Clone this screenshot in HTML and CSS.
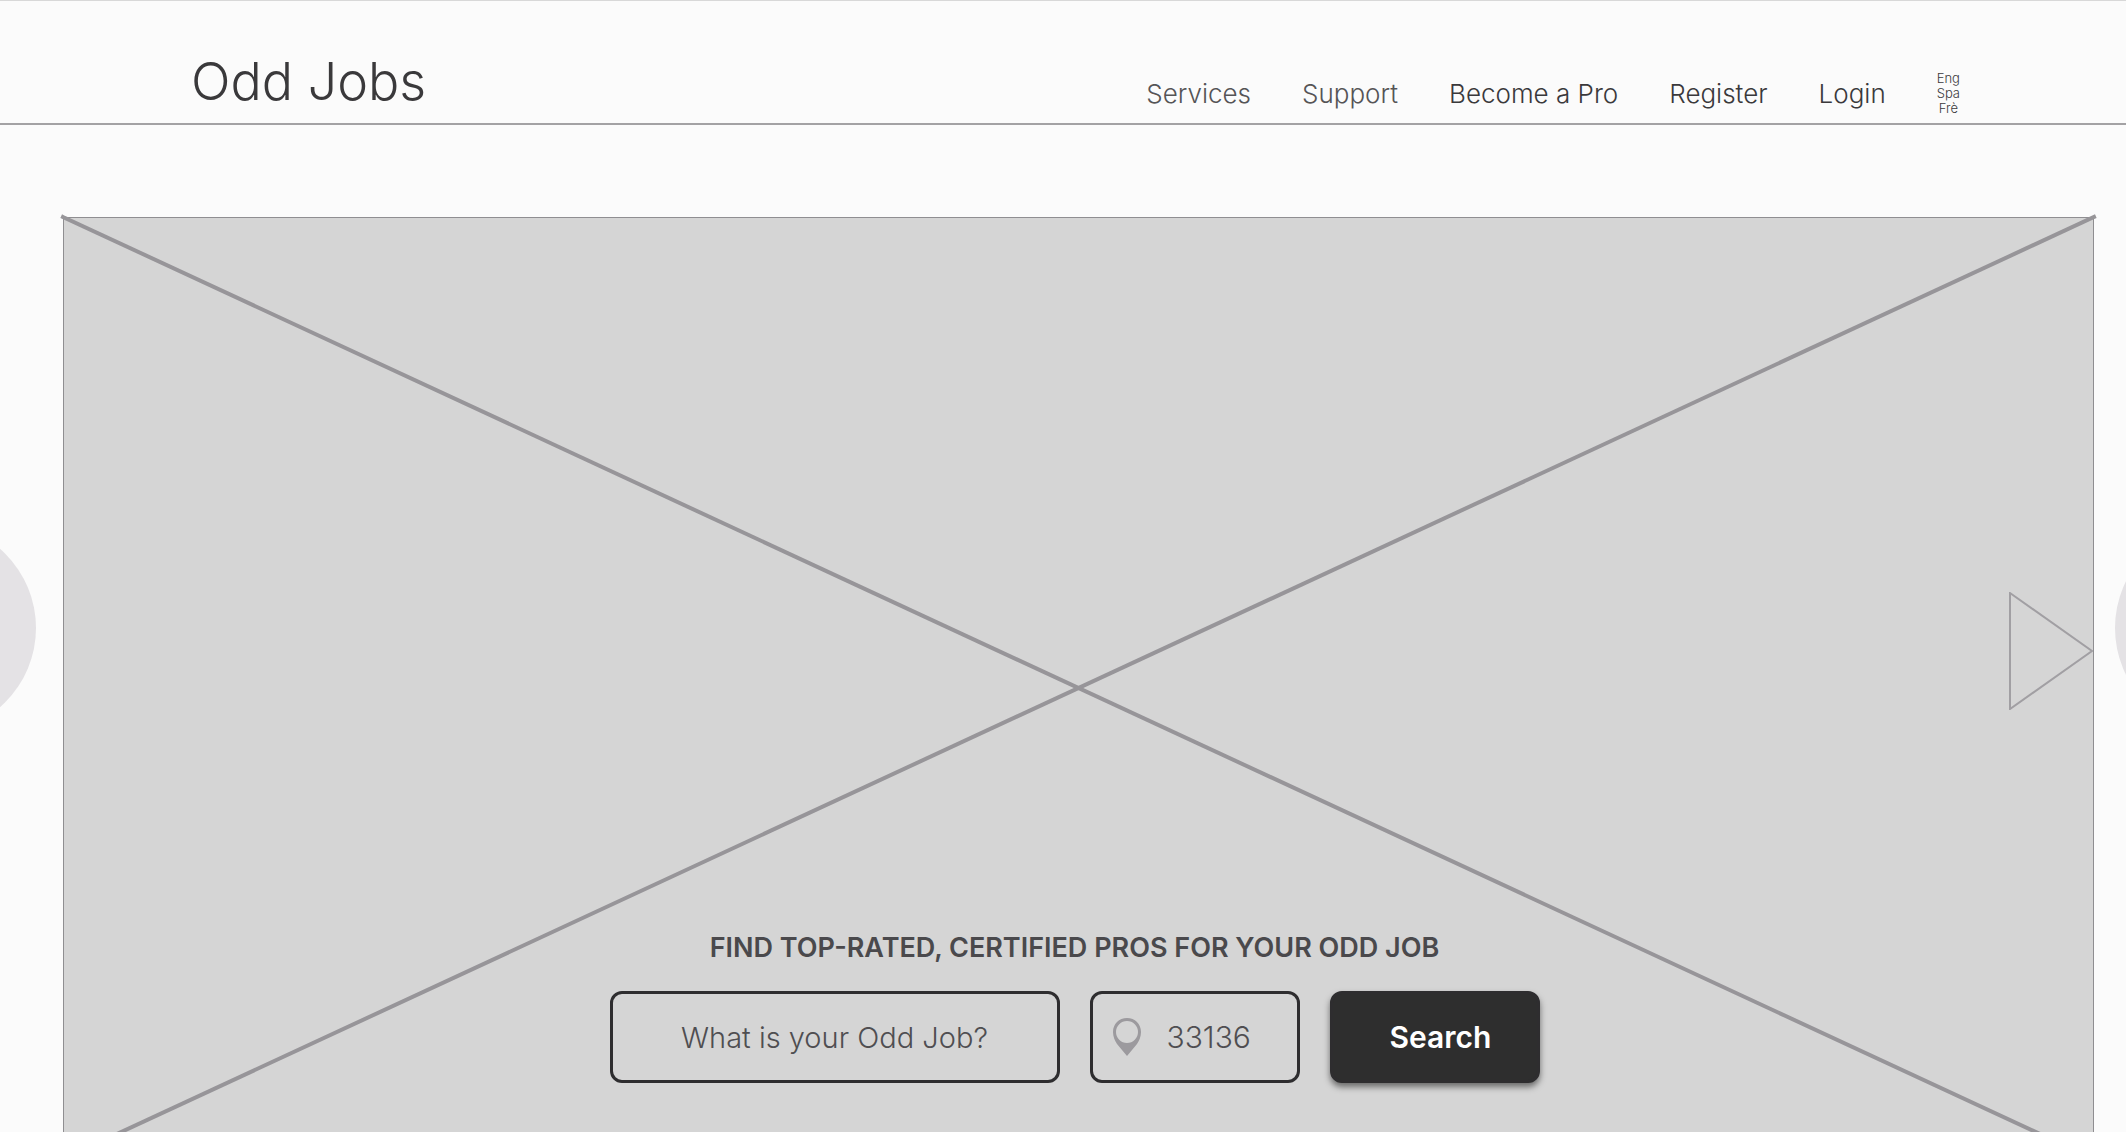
FILE: index.html
```html
<!DOCTYPE html>
<html lang="en">
<head>
    <meta charset="UTF-8">
    <meta name="viewport" content="width=device-width, initial-scale=1.0">
    <title>Odd Jobs</title>
    <link rel="stylesheet" href="styles.css">
</head>
<body>

    <header class="header">
        <a href="#" class="logo">Odd Jobs</a>
        <nav class="nav">
            <a href="#" class="muted">Services</a>
            <a href="#" class="muted">Support</a>
            <a href="#">Become a Pro</a>
            <a href="#">Register</a>
            <a href="#">Login</a>
            <div class="languages">
                <a href="#">Eng</a>
                <a href="#">Spa</a>
                <a href="#">Frè</a>
            </div>
        </nav>
    </header>

    <main class="carousel">
        <div class="circle circle-left"></div>

        <section class="hero">
            <svg class="placeholder" viewBox="0 0 100 100" preserveAspectRatio="none" aria-hidden="true">
                <line x1="0" y1="0" x2="100" y2="100" />
                <line x1="100" y1="0" x2="0" y2="100" />
            </svg>

            <h1>FIND TOP-RATED, CERTIFIED PROS FOR YOUR ODD JOB</h1>

            <form class="search">
                <input type="text" class="job" placeholder="What is your Odd Job?" aria-label="What is your Odd Job?">
                <div class="zip">
                    <svg viewBox="0 0 28 38" aria-hidden="true">
                        <path fill-rule="evenodd" d="M14 0C6 0 0 6 0 14c0 5 2 9 4 12l10 12 10-12c2-3 4-7 4-12C28 6 22 0 14 0zM14 3a11 11 0 1 1 0 22a11 11 0 1 1 0-22z" />
                    </svg>
                    <input type="text" value="33136" aria-label="Zip code">
                </div>
                <button type="submit">Search</button>
            </form>

            <button type="button" class="next" aria-label="Next">
                <svg viewBox="0 0 84 118" aria-hidden="true">
                    <path d="M1 1L83 59L1 117z" />
                </svg>
            </button>
        </section>

        <div class="circle circle-right"></div>
    </main>

</body>
</html>
```
FILE: styles.css
```css
* {
    box-sizing: border-box;
}

body {
    display: flex;
    flex-direction: column;
    height: 100vh;
    margin: 0;
    overflow: hidden;
    background-color: #fbfbfb;
    color: #3a393b;
    font-family: Inter, 'Liberation Sans', sans-serif;
    font-weight: 300;
}

a {
    color: inherit;
    text-decoration: none;
}

input, button {
    font: inherit;
    color: inherit;
}

.header {
    display: flex;
    flex: none;
    align-items: flex-end;
    justify-content: space-between;
    padding: 50px 166px 7px 191px;
    border-top: 1px solid #d8d8d8;
    border-bottom: 2px solid #a3a2a4;
}

.logo {
    margin-bottom: 3px;
    font-size: 52px;
    line-height: 62px;
}

.nav {
    display: flex;
    align-items: center;
    gap: 51px;
    font-size: 26px;
    line-height: 30px;
}

.nav .muted {
    color: #555456;
}

.languages {
    display: flex;
    flex-direction: column;
    align-items: center;
    font-size: 13px;
    line-height: 15px;
}

.carousel {
    position: relative;
    flex: 1;
    min-height: 0;
    padding: 92px 32px 0 63px;
    overflow: hidden;
}

.hero {
    position: relative;
    display: flex;
    flex-direction: column;
    align-items: center;
    justify-content: flex-end;
    height: 942px;
    padding-bottom: 75px;
    padding-right: 8px;
    border: 1px solid #8f8e91;
    background-color: #d5d5d5;
}

.placeholder {
    position: absolute;
    inset: -1px;
    width: calc(100% + 2px);
    height: calc(100% + 2px);
    overflow: visible;
}

.placeholder line {
    stroke: #979599;
    stroke-width: 4px;
    stroke-linecap: square;
    vector-effect: non-scaling-stroke;
}

.hero h1 {
    position: relative;
    margin: 0 0 25px;
    color: #4a494c;
    font-size: 27px;
    font-weight: 600;
    line-height: 36px;
}

.search {
    position: relative;
    display: flex;
    gap: 30px;
    font-size: 30px;
}

.search > * {
    height: 92px;
    border: 3px solid #2e2d2f;
    border-radius: 12px;
}

.job {
    width: 450px;
    background: none;
    color: #4f4e51;
    font-size: 29px;
    text-align: center;
}

.job::placeholder {
    color: inherit;
    opacity: 1;
}

.zip {
    display: flex;
    align-items: center;
    gap: 26px;
    width: 210px;
    padding-left: 20px;
    color: #4f4e51;
}

.zip svg {
    width: 28px;
    height: 38px;
    fill: #9c9a9e;
}

.zip input {
    width: 110px;
    padding: 0;
    border: none;
    background: none;
}

.search button {
    width: 210px;
    padding: 0 0 0 12px;
    background-color: #2e2e2e;
    box-shadow: 0 4px 6px rgba(0, 0, 0, 0.5);
    color: #fff;
    font-weight: 600;
}

.next {
    position: absolute;
    top: 374px;
    right: 0;
    padding: 0;
    border: none;
    background: none;
}

.next svg {
    display: block;
    width: 84px;
    height: 118px;
    fill: none;
    stroke: #a19fa3;
    stroke-width: 2px;
}

.circle {
    position: absolute;
    top: 398px;
    width: 210px;
    height: 210px;
    border-radius: 50%;
    background-color: #e4e2e5;
}

.circle-left {
    left: -174px;
}

.circle-right {
    right: -199px;
}
```
